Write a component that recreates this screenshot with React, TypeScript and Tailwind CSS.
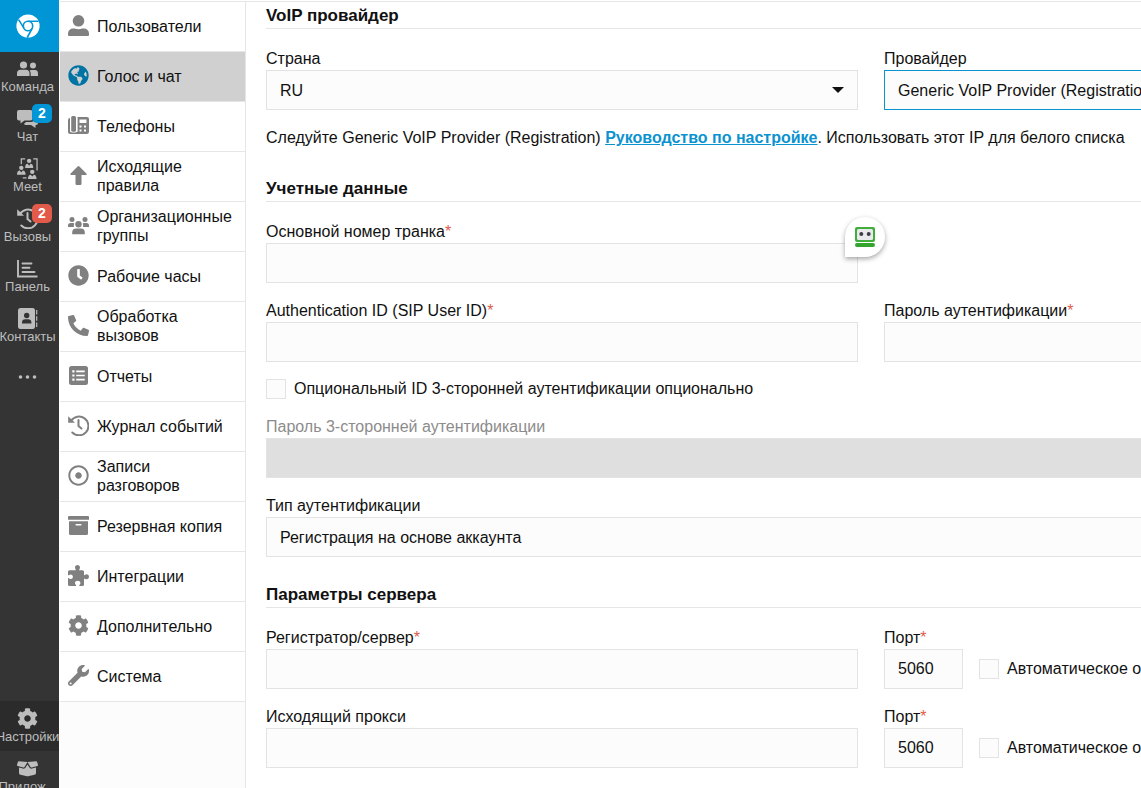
import { useState, type ReactNode, type ComponentType } from 'react'
import clsx from 'clsx'
import { FaClock, FaCog, FaGlobeAmericas, FaPhoneAlt, FaRegDotCircle, FaWrench } from 'react-icons/fa'

type Icon = ComponentType<{ className?: string }>

interface IconProps {
  className?: string
}

function LogoIcon({ className }: IconProps) {
  return (
    <svg viewBox="0 0 24 24" className={className} fill="none">
      <circle cx="12" cy="12" r="11.6" fill="#fff" />
      <circle cx="12" cy="12" r="4.7" stroke="#0096d6" strokeWidth="1.6" />
      <path d="M12 7.200h10.600M7.900 14.200 2.600 5.600M16.200 14.300 11.200 23.500" stroke="#0096d6" strokeWidth="1.600" />
    </svg>
  )
}

function TeamIcon({ className }: IconProps) {
  return (
    <svg viewBox="0 0 21 21" className={className} fill="currentColor">
      <circle cx="6.500" cy="7" r="3.600" />
      <path d="M0 18v-2.500a3.700 3.700 0 0 1 3.700-3.700h5.100a3.700 3.700 0 0 1 3.700 3.700V18Z" />
      <circle cx="16" cy="7.500" r="3" />
      <path d="M13.700 18v-2.500a4.800 4.800 0 0 0-1.100-3.100 4 4 0 0 1 1.400-.3h3.600a3.400 3.400 0 0 1 3.400 3.400V18Z" />
    </svg>
  )
}

function ChatIcon({ className }: IconProps) {
  return (
    <svg viewBox="0 0 21 21" className={className} fill="currentColor">
      <path d="M2 2h11.500a2 2 0 0 1 2 2v6.500a2 2 0 0 1-2 2H7.500l-4 3v-3H2a2 2 0 0 1-2-2V4a2 2 0 0 1 2-2Z" />
      <path d="M17 7h2a2 2 0 0 1 2 2v6a2 2 0 0 1-2 2h-.5v3l-4.500-3H9a2 2 0 0 1-2-1.300L9 14h5a3 3 0 0 0 3-3Z" />
    </svg>
  )
}

function MeetIcon({ className }: IconProps) {
  return (
    <svg viewBox="0 0 22 22" className={className} fill="currentColor">
      <path d="M4.500 6.500V1h4M17 1h4v12M6 20.800h4" stroke="currentColor" strokeWidth="1.300" fill="none" />
      <circle cx="12.700" cy="3" r="2.300" />
      <path d="M8.500 10.500c0-3 1-4.500 2.700-4.500l1.500 2 1.500-2c1.700 0 2.800 1.500 2.800 4.500Z" />
      <circle cx="4.500" cy="10.300" r="2.300" />
      <path d="M0 17.500c0-3 1.300-4.300 3-4.300l1.500 2 1.500-2c1.700 0 3 1.300 3 4.300Z" />
      <circle cx="16" cy="14.500" r="2.300" />
      <path d="M11.500 22c0-3 1.300-4.500 3-4.500l1.500 2 1.500-2c1.700 0 3 1.500 3 4.500Z" />
    </svg>
  )
}

function HistoryIcon({ className }: IconProps) {
  return (
    <svg viewBox="0 0 21 21" className={className} fill="none" stroke="currentColor" strokeWidth="2">
      <path d="M3 6A9.400 9.400 0 1 1 4.300 17.500" strokeLinecap="round" />
      <path d="M10.500 5v6l3 2.500" strokeLinecap="round" />
      <path d="M.2 1.300v6.500h6.800Z" fill="currentColor" stroke="none" />
    </svg>
  )
}

function ChartIcon({ className }: IconProps) {
  return (
    <svg viewBox="0 0 21 21" className={className} fill="none" stroke="currentColor" strokeWidth="1.900">
      <path d="M1 2v16.500h19.500" />
      <path d="M5.500 5.500h9M5.500 9.800h7M5.500 14h12" strokeLinecap="round" />
    </svg>
  )
}

function ContactsIcon({ className }: IconProps) {
  return (
    <svg viewBox="0 0 21 21" className={className}>
      <rect x="1" width="17" height="21" rx="2.500" fill="currentColor" />
      <path d="M19.700 2v4.500M19.700 8.200v4.600M19.700 14.500V19" stroke="currentColor" strokeWidth="1.200" />
      <g fill="#343434">
        <circle cx="9.700" cy="7.500" r="2.700" />
        <path d="M5 15.500v-1a3.300 3.300 0 0 1 3.300-3.200h2.800a3.300 3.300 0 0 1 3.300 3.200v1Z" />
      </g>
    </svg>
  )
}

function DotsIcon({ className }: IconProps) {
  return (
    <svg viewBox="0 0 21 21" className={className} fill="currentColor">
      <circle cx="3.500" cy="11" r="1.800" />
      <circle cx="10.500" cy="11" r="1.800" />
      <circle cx="17.500" cy="11" r="1.800" />
    </svg>
  )
}

function BoxIcon({ className }: IconProps) {
  return (
    <svg viewBox="0 0 21 21" className={className} fill="currentColor">
      <path d="M1.800 3.200 10.500 4 7.700 8.800a1.300 1.300 0 0 1-1.500.6L.7 7.900A1 1 0 0 1 .1 6.500L1 3.700a.8.800 0 0 1 .8-.5Z" />
      <path d="M19.200 3.200 10.500 4l2.800 4.800a1.300 1.300 0 0 0 1.500.6l5.500-1.500a1 1 0 0 0 .6-1.400L20 3.700a.8.800 0 0 0-.8-.5Z" />
      <path d="M2 9.500l4 1.100a2.300 2.300 0 0 0 2.600-1L10.500 6.400l1.900 3.200a2.300 2.300 0 0 0 2.600 1l4-1.100v5.400a2 2 0 0 1-1.500 1.900l-6.400 1.500a3 3 0 0 1-1.200 0l-6.400-1.500A2 2 0 0 1 2 14.900Z" />
    </svg>
  )
}

function UserIcon({ className }: IconProps) {
  return (
    <svg viewBox="0 0 21 21" className={className} fill="currentColor">
      <circle cx="10.500" cy="5.800" r="5.800" />
      <path d="M0 21v-2.500a5 5 0 0 1 5-5h1.800a9 9 0 0 0 7.400 0H16a5 5 0 0 1 5 5V20a1 1 0 0 1-1 1H1a1 1 0 0 1-1-1Z" />
    </svg>
  )
}

function OfficePhoneIcon({ className }: IconProps) {
  return (
    <svg viewBox="0 0 21 21" className={className} fill="currentColor" fillRule="evenodd">
      <path d="M2.300 3A2.200 2.200 0 0 0 0 5.200v11.600A2.200 2.200 0 0 0 2.200 19h16.600a2.200 2.200 0 0 0 2.200-2.200V4a2 2 0 0 0-2-2H9.500v15H2.300ZM11.500 4.500h7V8h-7ZM11.500 10.500h2v2h-2ZM16 10.500h2v2h-2ZM11.500 14.500h2v2h-2ZM16 14.500h2v2h-2Z" />
      <rect x="2" y="1" width="7.200" height="16.500" rx="2" fill="#fff" />
      <rect x="3.200" y="1" width="4.800" height="15.800" rx="1.500" />
    </svg>
  )
}

function ArrowIcon({ className }: IconProps) {
  return (
    <svg viewBox="0 0 21 21" className={className} fill="currentColor">
      <path d="M9.600 1.600a1.200 1.200 0 0 1 1.800 0l7 7a.9.900 0 0 1-.7 1.500H13.500v8.700a1.200 1.200 0 0 1-1.200 1.200H8.700a1.200 1.200 0 0 1-1.200-1.200v-8.700H3.300a.9.900 0 0 1-.7-1.500Z" />
    </svg>
  )
}

function GroupIcon({ className }: IconProps) {
  return (
    <svg viewBox="0 0 21 21" className={className} fill="currentColor">
      <circle cx="4" cy="4.500" r="2.500" />
      <circle cx="17" cy="4.500" r="2.500" />
      <path d="M0 12v-1.500A2.500 2.500 0 0 1 2.500 8h2.800l1 .4A5 5 0 0 0 6 12ZM21 12v-1.500A2.500 2.500 0 0 0 18.500 8h-2.800l-1 .4A5 5 0 0 1 15 12Z" />
      <circle cx="10.500" cy="9.300" r="3.200" />
      <path d="M4.200 19.200v-1.700a4 4 0 0 1 4-4h4.600a4 4 0 0 1 4 4v1.700Z" />
    </svg>
  )
}

function ReportIcon({ className }: IconProps) {
  return (
    <svg viewBox="0 0 21 21" className={className}>
      <rect x="1" y="1" width="19" height="19" rx="2.500" fill="currentColor" />
      <path d="M8.200 6.300h8.500M8.200 10.500h8.500M8.200 14.700h8.500" stroke="#fff" strokeWidth="1.700" />
      <path d="M4.300 6.300h2.200M4.300 10.500h2.200M4.300 14.700h2.200" stroke="#fff" strokeWidth="2.200" />
    </svg>
  )
}

function ArchiveIcon({ className }: IconProps) {
  return (
    <svg viewBox="0 0 21 21" className={className} fill="currentColor" fillRule="evenodd">
      <path d="M1 1h19a1 1 0 0 1 1 1v2.800H0V2a1 1 0 0 1 1-1Z" />
      <path d="M1 6.200h19v12.300A1.500 1.500 0 0 1 18.500 20h-16A1.500 1.500 0 0 1 1 18.500ZM8.200 9a.7.700 0 0 0 0 1.500h4.600a.7.700 0 0 0 0-1.500Z" />
    </svg>
  )
}

function PuzzleIcon({ className }: IconProps) {
  return (
    <svg viewBox="0 0 21 21" className={className} fill="currentColor">
      <path d="M7.800 5.300c0-1-.8-1.500-.8-2.700C7 1.200 8.100.1 9.500.1S12 1.200 12 2.600c0 1.200-.8 1.700-.8 2.700h3.300a1.500 1.500 0 0 1 1.500 1.500v3.400c1 0 1.400-.9 2.700-.9 1.300 0 2.300 1.100 2.300 2.500s-1 2.500-2.300 2.500c-1.300 0-1.700-.9-2.700-.9v6a1.500 1.500 0 0 1-1.500 1.500h-3.300c0-1.300 1.200-1.500 1.200-3 0-1.300-1.200-2.200-2.700-2.200S7 16.600 7 17.900c0 1.500 1.200 1.700 1.200 3H1.500A1.500 1.500 0 0 1 0 19.400v-6.500c1.200 0 1.500 1.100 2.800 1.100 1.200 0 2.100-1 2.100-2.300S4 9.400 2.800 9.400C1.500 9.400 1.200 10.300 0 10.300V6.800a1.500 1.500 0 0 1 1.500-1.500Z" />
    </svg>
  )
}

function RobotIcon({ className }: IconProps) {
  return (
    <svg viewBox="0 0 20 20" className={className}>
      <rect width="20" height="15" rx="2" fill="#3fae3a" />
      <rect x="2" y="2" width="16" height="11" rx="1.500" fill="#e9e9ee" />
      <circle cx="6.300" cy="7" r="2" fill="#3d3d45" />
      <circle cx="13.700" cy="7" r="2" fill="#3d3d45" />
      <rect y="16" width="20" height="4" rx="2" fill="#34a52c" />
    </svg>
  )
}

interface NavItem {
  label: string
  icon: Icon
  badge?: number
  badgeClass?: string
}

const navItems: NavItem[] = [
  { label: 'Команда', icon: TeamIcon },
  { label: 'Чат', icon: ChatIcon, badge: 2, badgeClass: 'bg-[#0096d6]' },
  { label: 'Meet', icon: MeetIcon },
  { label: 'Вызовы', icon: HistoryIcon, badge: 2, badgeClass: 'bg-[#e15a4a]' },
  { label: 'Панель', icon: ChartIcon },
  { label: 'Контакты', icon: ContactsIcon },
]

const menuItems: { label: string; icon: Icon }[] = [
  { label: 'Пользователи', icon: UserIcon },
  { label: 'Голос и чат', icon: FaGlobeAmericas },
  { label: 'Телефоны', icon: OfficePhoneIcon },
  { label: 'Исходящие правила', icon: ArrowIcon },
  { label: 'Организационные группы', icon: GroupIcon },
  { label: 'Рабочие часы', icon: FaClock },
  { label: 'Обработка вызовов', icon: FaPhoneAlt },
  { label: 'Отчеты', icon: ReportIcon },
  { label: 'Журнал событий', icon: HistoryIcon },
  { label: 'Записи разговоров', icon: FaRegDotCircle },
  { label: 'Резервная копия', icon: ArchiveIcon },
  { label: 'Интеграции', icon: PuzzleIcon },
  { label: 'Дополнительно', icon: FaCog },
  { label: 'Система', icon: FaWrench },
]

function NavLink({ item, active }: { item: NavItem; active?: boolean }) {
  const { label, icon: ItemIcon, badge, badgeClass } = item
  return (
    <a
      href="#"
      className={clsx(
        'relative flex h-[50px] shrink-0 flex-col items-center pr-1 pt-[7px]',
        active && 'bg-[#2b2b2b]'
      )}
    >
      <ItemIcon className="h-[21px] w-[21px] shrink-0" />
      <span className="whitespace-nowrap leading-4">{label}</span>
      {badge && (
        <span
          className={clsx(
            'absolute left-8 top-[3px] h-[19px] w-5 rounded-[5px] text-center text-sm font-bold leading-[19px] text-white',
            badgeClass
          )}
        >
          {badge}
        </span>
      )}
    </a>
  )
}

function NavRail() {
  return (
    <nav className="flex w-[59px] shrink-0 flex-col overflow-hidden bg-[#343434] text-[13px] text-[#bdbdbd]">
      <a href="#" aria-label="Web Client" className="-mb-px flex h-[52px] shrink-0 items-center justify-center bg-[#0096d6] pr-1">
        <LogoIcon className="h-6 w-6" />
      </a>
      {navItems.map(item => (
        <NavLink key={item.label} item={item} />
      ))}
      <button type="button" aria-label="Ещё" className="flex h-[50px] shrink-0 items-center justify-center pr-1">
        <DotsIcon className="h-[21px] w-[21px]" />
      </button>
      <div className="mt-75 shrink-0">
        <NavLink item={{ label: 'Настройки', icon: FaCog }} active />
        <NavLink item={{ label: 'Прилож...', icon: BoxIcon }} />
      </div>
    </nav>
  )
}

function SettingsMenu() {
  const [selected, setSelected] = useState('Голос и чат')
  return (
    <aside className="w-[186px] shrink-0 border-r border-[#e6e6e6] bg-[#fcfcfc]">
      <ul>
        {menuItems.map(({ label, icon: ItemIcon }) => {
          const active = label === selected
          return (
            <li key={label} className="border-b border-[#e6e6e6]">
              <button
                type="button"
                onClick={() => setSelected(label)}
                className={clsx(
                  'flex h-[49px] w-full items-center gap-2 pb-px pl-2 pr-2.5 text-left leading-[19px]',
                  active ? 'bg-[#d0d0d0]' : 'bg-white'
                )}
              >
                <ItemIcon
                  className={clsx('mb-px h-[21px] w-[21px] shrink-0', active ? 'text-[#0073a5]' : 'text-[#808080]')}
                />
                <span>{label}</span>
              </button>
            </li>
          )
        })}
      </ul>
    </aside>
  )
}

const boxClass = 'block h-10 w-full border border-[#e3e3e3] bg-[#fcfcfc] px-[13px] outline-none'

interface FieldProps {
  id: string
  label: string
  required?: boolean
  disabled?: boolean
  className?: string
  children?: ReactNode
}

function FieldLabel({ id, label, required, disabled }: FieldProps) {
  return (
    <label htmlFor={id} className={clsx('block whitespace-nowrap leading-[22px]', disabled && 'text-[#8c8c8c]')}>
      {label}
      {required && <span className="text-[#e15a4a]">*</span>}
    </label>
  )
}

function TextField({ type = 'text', value = '', children, ...field }: FieldProps & { type?: string; value?: string }) {
  return (
    <div className={clsx('relative mb-[17px]', field.className)}>
      <FieldLabel {...field} />
      <input
        id={field.id}
        type={type}
        defaultValue={value}
        disabled={field.disabled}
        className={clsx(boxClass, field.disabled && 'bg-[#dfdfdf]!')}
      />
      {children}
    </div>
  )
}

function SelectField({ option, focused, ...field }: FieldProps & { option: string; focused?: boolean }) {
  return (
    <div className={clsx('mb-[17px]', field.className)}>
      <FieldLabel {...field} />
      <div className="relative">
        <select id={field.id} className={clsx(boxClass, 'appearance-none pt-0.5', focused && 'border-[#0b93cf]!')}>
          <option>{option}</option>
        </select>
        <svg viewBox="0 0 12 6" className="pointer-events-none absolute right-3.5 top-[17px] h-1.5 w-3">
          <path d="M0 0h12L6 6Z" fill="#111" />
        </svg>
      </div>
    </div>
  )
}

function Checkbox({ id, label }: { id: string; label: string }) {
  return (
    <div className="flex h-5 items-center gap-2">
      <input id={id} type="checkbox" className="h-5 w-5 shrink-0 appearance-none border border-[#e3e3e3] bg-[#fcfcfc] checked:bg-[#0096d6]" />
      <label htmlFor={id} className="whitespace-nowrap">
        {label}
      </label>
    </div>
  )
}

function PortFields({ id }: { id: string }) {
  return (
    <div className="flex gap-4">
      <TextField id={`${id}-port`} label="Порт" required value="5060" className="w-[79px]" />
      <div className="pt-8">
        <Checkbox id={`${id}-auto`} label="Автоматическое обнаружение" />
      </div>
    </div>
  )
}

function Section({ title, children }: { title: string; children: ReactNode }) {
  return (
    <section className="pt-[9px] first:pt-0.5">
      <h2 className="mb-[19px] border-b border-[#e6e6e6] text-[17px] font-bold leading-6">{title}</h2>
      {children}
    </section>
  )
}

function TrunkForm() {
  return (
    <form className="min-w-[1230px] flex-1 pl-5">
      <Section title="VoIP провайдер">
        <div className="grid grid-cols-2 gap-x-[26px]">
          <SelectField id="country" label="Страна" option="RU" />
          <SelectField id="provider" label="Провайдер" option="Generic VoIP Provider (Registration)" focused />
        </div>
        <p className="mb-5 whitespace-nowrap leading-[21px]">
          Следуйте Generic VoIP Provider (Registration){' '}
          <a href="#" className="font-bold text-[#0b93cf] underline">
            Руководство по настройке
          </a>
          . Использовать этот IP для белого списка
        </p>
      </Section>

      <Section title="Учетные данные">
        <div className="grid grid-cols-2 gap-x-[26px]">
          <TextField id="trunk" label="Основной номер транка" required>
            <button
              type="button"
              aria-label="RoboForm"
              className="absolute right-[-27px] -top-1 flex h-10 w-10 items-center justify-center rounded-full rounded-bl-none bg-white shadow-[0_2px_5px_rgba(0,0,0,0.35)]"
            >
              <RobotIcon className="h-5 w-5" />
            </button>
          </TextField>
          <TextField id="auth-id" label="Authentication ID (SIP User ID)" required className="col-start-1" />
          <TextField id="auth-password" label="Пароль аутентификации" required type="password" />
        </div>
        <div className="mb-[17px]">
          <Checkbox id="three-way" label="Опциональный ID 3-сторонней аутентификации опционально" />
        </div>
        <TextField id="three-way-password" label="Пароль 3-сторонней аутентификации" disabled />
        <SelectField id="auth-type" label="Тип аутентификации" option="Регистрация на основе аккаунта" />
      </Section>

      <Section title="Параметры сервера">
        <div className="grid grid-cols-2 gap-x-[26px]">
          <TextField id="registrar" label="Регистратор/сервер" required />
          <PortFields id="registrar" />
          <TextField id="proxy" label="Исходящий прокси" />
          <PortFields id="proxy" />
        </div>
      </Section>
    </form>
  )
}

export default function App() {
  return (
    <div className="flex h-screen overflow-hidden bg-white font-['Liberation_Sans',Arial,sans-serif] text-base text-[#111]">
      <NavRail />
      <div className="flex min-w-0 flex-1 overflow-hidden pl-px pt-px">
        <div className="flex min-w-0 flex-1 border-t border-[#e6e6e6]">
          <SettingsMenu />
          <TrunkForm />
        </div>
      </div>
    </div>
  )
}
